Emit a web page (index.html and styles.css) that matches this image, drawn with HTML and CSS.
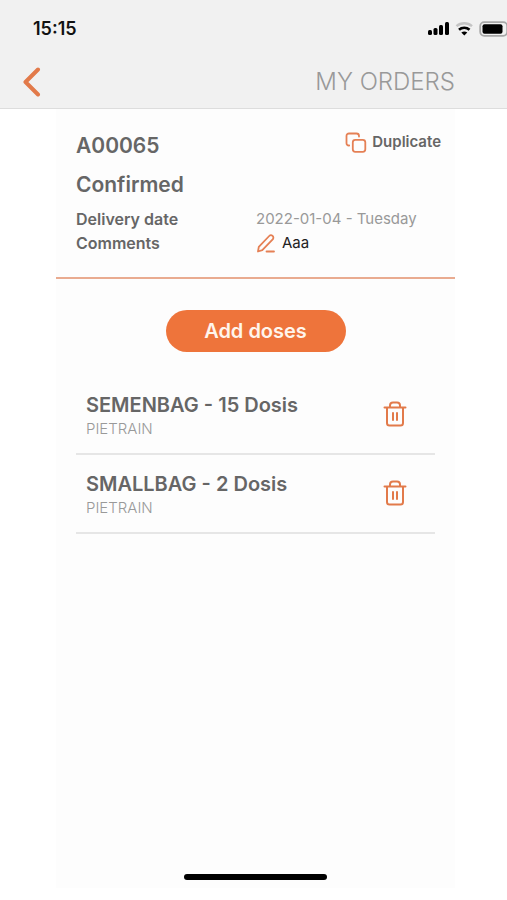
FILE: index.html
```html
<!DOCTYPE html>
<html lang="en">
<head>
<meta charset="utf-8">
<meta name="viewport" content="width=device-width, initial-scale=1">
<title>My orders</title>
<link rel="stylesheet" href="styles.css">
</head>
<body>
<header class="top">
  <div class="status">
    <span class="time">15:15</span>
    <svg class="status-icons" width="80" height="16" viewBox="0 0 80 16" aria-hidden="true">
      <g fill="#000">
        <rect x="1" y="9" width="4" height="5" rx="1.500"/>
        <rect x="6.500" y="7" width="4" height="7" rx="1.500"/>
        <rect x="12" y="4" width="4" height="10" rx="1.500"/>
        <rect x="18" y="1" width="4" height="13" rx="1.500"/>
      </g>
      <path d="M29.500 5.200a11.500 11.500 0 0 1 15.500 0" fill="none" stroke="#c4c4c4" stroke-width="2.400"/>
      <path d="M32 8.800a7.600 7.600 0 0 1 10.500 0" fill="none" stroke="#000" stroke-width="2.600"/>
      <path d="M34.300 11.600q3-2.400 6 0l-3 2.900z" fill="#000"/>
      <rect x="53.200" y="1.200" width="27" height="13.600" rx="4" fill="#f1f1f1" stroke="#a8a8a8" stroke-width="1.800"/>
      <rect x="55.500" y="3.300" width="20" height="9.400" rx="2" fill="#000"/>
    </svg>
  </div>
  <div class="nav">
    <button class="back" type="button" aria-label="Back">
      <svg width="20" height="30" viewBox="0 0 20 30" aria-hidden="true"><path d="M16 2.500L3.500 15l12.500 12.500" fill="none" stroke="#e27a4a" stroke-width="4" stroke-linecap="round" stroke-linejoin="round"/></svg>
    </button>
    <h1 class="title">MY ORDERS</h1>
  </div>
</header>
<main class="panel">
  <section class="summary">
    <div class="summary-head">
      <h2 class="heading">A00065</h2>
      <button class="duplicate" type="button">
        <svg width="22" height="22" viewBox="0 0 22 22" fill="none" stroke="#e58055" stroke-width="1.800" stroke-linecap="round" aria-hidden="true">
          <rect x="7.800" y="7.800" width="12.500" height="12" rx="2.500"/>
          <path d="M4.200 13.500H3.700A2.200 2.200 0 0 1 1.500 11.300V4A2.500 2.500 0 0 1 4 1.500h7.500A2.500 2.500 0 0 1 14 4v.5"/>
        </svg>
        Duplicate
      </button>
    </div>
    <p class="heading state">Confirmed</p>
    <dl class="details">
      <dt>Delivery date</dt>
      <dd>2022-01-04 - Tuesday</dd>
      <dt>Comments</dt>
      <dd>
        <button class="comment" type="button">
          <svg width="20" height="20" viewBox="0 0 20 20" fill="none" stroke="#e58055" stroke-width="1.800" stroke-linecap="round" stroke-linejoin="round" aria-hidden="true">
            <path d="M2 18.500l.8-4.700L13.200 3a2.400 2.400 0 0 1 3.500 3.300L6.300 17.200zM10.500 18.500H18"/>
          </svg>
          Aaa
        </button>
      </dd>
    </dl>
  </section>
  <button class="add" type="button">Add doses</button>
  <ul class="doses">
    <li class="dose">
      <div>
        <h3 class="heading">SEMENBAG - 15 Dosis</h3>
        <p class="breed">PIETRAIN</p>
      </div>
      <button class="remove" type="button" aria-label="Remove SEMENBAG">
        <svg width="24" height="26" viewBox="0 0 24 26" fill="none" stroke="#e27a4a" stroke-width="2" stroke-linecap="round" stroke-linejoin="round" aria-hidden="true">
          <path d="M1.500 6.500h21M4 6.500V22a2.500 2.500 0 0 0 2.500 2.500h11A2.500 2.500 0 0 0 20 22V6.500M7 6V4.500a3 3 0 0 1 3-3h4a3 3 0 0 1 3 3V6M10 12v7M14 12v7"/>
        </svg>
      </button>
    </li>
    <li class="dose">
      <div>
        <h3 class="heading">SMALLBAG - 2 Dosis</h3>
        <p class="breed">PIETRAIN</p>
      </div>
      <button class="remove" type="button" aria-label="Remove SMALLBAG">
        <svg width="24" height="26" viewBox="0 0 24 26" fill="none" stroke="#e27a4a" stroke-width="2" stroke-linecap="round" stroke-linejoin="round" aria-hidden="true">
          <path d="M1.500 6.500h21M4 6.500V22a2.500 2.500 0 0 0 2.500 2.500h11A2.500 2.500 0 0 0 20 22V6.500M7 6V4.500a3 3 0 0 1 3-3h4a3 3 0 0 1 3 3V6M10 12v7M14 12v7"/>
        </svg>
      </button>
    </li>
  </ul>
  <div class="home-bar"></div>
</main>
</body>
</html>
```
FILE: styles.css
```css
* {
  box-sizing: border-box;
}

body {
  margin: 0;
  min-height: 100vh;
  padding-bottom: 12px;
  display: flex;
  flex-direction: column;
  background: #fff;
  color: #666;
  font-family: Inter, "Liberation Sans", sans-serif;
  font-size: 15px;
  line-height: 24px;
}

h1, h2, h3, p, ul, dl, dd {
  margin: 0;
  padding: 0;
}

button {
  padding: 0;
  border: 0;
  background: none;
  color: inherit;
  font: inherit;
  cursor: pointer;
}

svg {
  display: block;
  flex: none;
}

.top {
  background: #f1f1f1;
  border-bottom: 1px solid #ddd;
}

.status {
  display: flex;
  justify-content: space-between;
  align-items: center;
  height: 58px;
  padding-left: 33px;
}

.time {
  color: #111;
  font-size: 18px;
  font-weight: 600;
}

.nav {
  display: flex;
  justify-content: space-between;
  align-items: center;
  height: 50px;
  padding: 0 52px 2px 22px;
}

.title {
  color: #999;
  font-size: 24px;
  font-weight: 300;
}

.panel {
  flex: 1;
  display: flex;
  flex-direction: column;
  margin: 0 52px 0 56px;
  background: #fdfdfd;
}

.summary {
  padding: 21px 14px 22px 20px;
  border-bottom: 2px solid #e9ab90;
}

.summary-head {
  display: flex;
  justify-content: space-between;
  align-items: flex-start;
}

.heading {
  font-size: 21px;
  line-height: 32px;
  font-weight: 600;
}

.duplicate {
  display: flex;
  gap: 5px;
  font-weight: 600;
}

.duplicate svg {
  margin-top: 2px;
}

.state {
  margin-top: 7px;
}

.details {
  display: grid;
  grid-template-columns: 180px 1fr;
  margin-top: 6px;
}

.details dt {
  font-size: 16px;
  font-weight: 600;
}

.details dd {
  color: #999;
  white-space: nowrap;
}

.comment {
  display: flex;
  align-items: center;
  gap: 6px;
  color: #222;
}

.add {
  align-self: center;
  width: 180px;
  margin-top: 31px;
  border-radius: 21px;
  background: #ee743b;
  color: #fff5ec;
  font-size: 20px;
  line-height: 42px;
  font-weight: 600;
}

.doses {
  margin: 24px 20px 0;
  list-style: none;
}

.dose {
  display: flex;
  justify-content: space-between;
  align-items: center;
  padding: 14px 28px 15px 10px;
  border-bottom: 2px solid #e6e6e6;
}

.dose .heading {
  font-size: 20px;
  line-height: 30px;
}

.breed {
  color: #999;
  font-weight: 300;
  line-height: 18px;
}

.home-bar {
  align-self: center;
  width: 143px;
  height: 6px;
  margin: auto 0 8px;
  border-radius: 3px;
  background: #000;
}
```
